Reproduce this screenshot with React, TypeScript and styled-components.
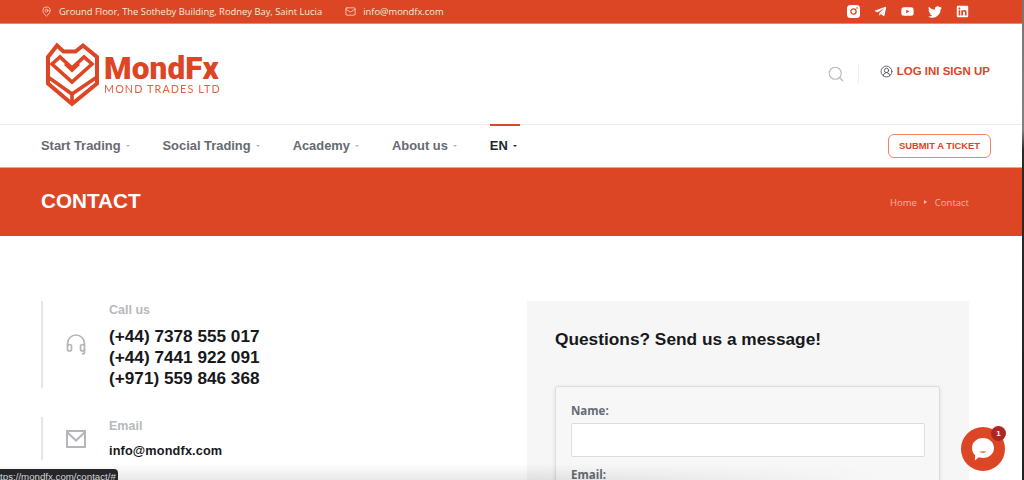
import * as React from 'react';
import styled, { createGlobalStyle } from 'styled-components';
import { FaTelegramPlane, FaYoutube, FaTwitter, FaLinkedin } from 'react-icons/fa';
import { MapPin, Mail, Search, CircleUserRound } from 'lucide-react';

const ORANGE = '#dc4625';

const Global = createGlobalStyle`
  html, body {
    margin: 0;
    padding: 0;
    background: #fff;
  }
  * {
    box-sizing: border-box;
  }
`;

const Shell = styled.div`
  position: relative;
  display: flex;
  width: 1024px;
  height: 480px;
  overflow: hidden;
  font-family: 'Liberation Sans', Arial, sans-serif;
`;

const Page = styled.div`
  flex: 1 0 0;
  min-width: 0;
`;

const Edge = styled.div`
  width: 2px;
  background: linear-gradient(#777 0, #86807c 130px, #2a2a2a 150px, #222 100%);
`;

const TopBar = styled.div`
  display: flex;
  align-items: center;
  justify-content: space-between;
  height: 24px;
  padding: 0 53px 0 41px;
  background: ${ORANGE};
  border-bottom: 1px solid #ef8468;
  color: #fbe6df;
  font-family: 'Open Sans', sans-serif;
  font-size: 9.4px;
`;

const TopInfo = styled.div`
  display: flex;
  align-items: center;
  gap: 7px;
  margin-right: 23px;
  svg {
    flex: none;
  }
`;

const TopLeft = styled.div`
  display: flex;
  align-items: center;
`;

const Socials = styled.div`
  display: flex;
  align-items: center;
  gap: 14px;
  color: #fff;
`;

const Header = styled.div`
  display: flex;
  align-items: center;
  justify-content: space-between;
  height: 101px;
  padding: 0 32px 0 45px;
  border-bottom: 1px solid #ececec;
`;

const Logo = styled.div`
  display: flex;
  align-items: center;
  gap: 3px;
  margin-top: 1px;
`;

const LogoText = styled.div`
  display: flex;
  flex-direction: column;
  margin-top: 1px;
  color: ${ORANGE};
`;

const LogoName = styled.div`
  font-family: Roboto, sans-serif;
  font-weight: 900;
  font-size: 31.5px;
  line-height: 27px;
  letter-spacing: 0.1px;
`;

const LogoSub = styled.div`
  font-family: Lato, sans-serif;
  font-size: 10.8px;
  line-height: 13px;
  letter-spacing: 1.1px;
  opacity: 0.85;
`;

const HeaderRight = styled.div`
  display: flex;
  align-items: center;
  margin-top: -1px;
`;

const SearchBox = styled.div`
  display: flex;
  align-items: center;
  height: 18px;
  padding-right: 13px;
  margin-right: 21px;
  border-right: 1px solid #eee;
  color: #b9b9b9;
`;

const Account = styled.div`
  display: flex;
  align-items: center;
  gap: 4px;
  margin-top: -5px;
  color: #4b4f58;
`;

const AccountLabel = styled.span`
  color: ${ORANGE};
  font-weight: 700;
  font-size: 11.5px;
`;

const Nav = styled.nav`
  display: flex;
  align-items: center;
  justify-content: space-between;
  height: 42px;
  padding: 0 31px 0 41px;
`;

const NavList = styled.div`
  display: flex;
  height: 100%;
  gap: 33px;
`;

const NavItem = styled.div<{ $active?: boolean }>`
  display: flex;
  align-items: center;
  gap: 5px;
  height: 100%;
  margin-top: -1px;
  padding: 0 ${(p) => (p.$active ? '3px' : '0')} 2px 0;
  border-top: 2px solid ${(p) => (p.$active ? '#e0442a' : 'transparent')};
  color: ${(p) => (p.$active ? '#23262b' : '#666a73')};
  font-weight: 700;
  font-size: 12.9px;
`;

const Caret = styled.span<{ $active?: boolean }>`
  width: 0;
  height: 0;
  margin-top: 1px;
  border-left: 2.5px solid transparent;
  border-right: 2.5px solid transparent;
  border-top: 2.5px solid ${(p) => (p.$active ? '#23262b' : '#b5b5b8')};
`;

const TicketButton = styled.button`
  width: 103px;
  height: 24px;
  margin-top: -1px;
  padding: 0;
  background: #fff;
  border: 1px solid #f0846b;
  border-radius: 6px;
  color: ${ORANGE};
  font-family: inherit;
  font-weight: 700;
  font-size: 9.4px;
`;

const Banner = styled.div`
  display: flex;
  align-items: center;
  justify-content: space-between;
  height: 69px;
  padding: 0 53px 0 41px;
  background: ${ORANGE};
  border-top: 1px solid #f2a18c;
`;

const BannerTitle = styled.h1`
  margin: 0 0 2px;
  color: #fff;
  font-size: 20.7px;
  font-weight: 700;
`;

const Crumbs = styled.div`
  display: flex;
  align-items: center;
  gap: 6px;
  color: #f3b0a0;
  font-family: 'Open Sans', sans-serif;
  font-size: 9.5px;
`;

const CrumbArrow = styled.span`
  width: 0;
  height: 0;
  margin: 0 1.5px;
  border-top: 2.5px solid transparent;
  border-bottom: 2.5px solid transparent;
  border-left: 3px solid #f6c4b7;
`;

const Main = styled.main`
  display: flex;
  padding: 65px 53px 0 41px;
`;

const InfoColumn = styled.div`
  display: flex;
  flex-direction: column;
  gap: 29px;
  width: 486px;
`;

const InfoBlock = styled.div`
  display: flex;
  align-items: center;
  border-left: 2px solid #e6e6e6;
`;

const InfoIcon = styled.div`
  display: flex;
  justify-content: center;
  width: 66px;
`;

const InfoText = styled.div`
  padding-top: 1px;
`;

const InfoLabel = styled.div`
  color: #b7b8bd;
  font-weight: 700;
  font-size: 12.5px;
  line-height: 16px;
`;

const Phones = styled.div`
  margin-top: 8px;
  margin-bottom: -1px;
  color: #17181b;
  font-weight: 700;
  font-size: 17.2px;
  line-height: 21px;
`;

const EmailText = styled.div`
  margin-top: 9px;
  padding-bottom: 1px;
  color: #17181b;
  font-weight: 700;
  font-size: 12.7px;
  line-height: 16px;
  letter-spacing: 0.15px;
`;

const FormPanel = styled.section`
  width: 442px;
  height: 300px;
  padding: 28px 29px 28px 28px;
  background: #f6f6f6;
`;

const FormTitle = styled.h2`
  margin: 0 0 36px;
  color: #17181b;
  font-size: 17.3px;
  line-height: 21px;
  font-weight: 700;
`;

const FormCard = styled.div`
  width: 385px;
  padding: 16px 14px 16px 15px;
  background: #f7f7f7;
  border: 1px solid #dcdcdc;
  border-radius: 3px;
  box-shadow: 0 1px 4px rgba(0, 0, 0, 0.1);
`;

const FieldLabel = styled.label`
  display: block;
  margin-bottom: 5px;
  color: #666a75;
  font-family: 'Open Sans', sans-serif;
  font-weight: 700;
  font-size: 11.5px;
  line-height: 15px;
`;

const FieldInput = styled.input`
  display: block;
  width: 100%;
  height: 34px;
  margin-bottom: 10px;
  background: #fff;
  border: 1px solid #dcdcdc;
  border-radius: 2px;
`;

const WindowShade = styled.div`
  position: absolute;
  left: 0;
  bottom: 0;
  width: 880px;
  height: 16px;
  background: linear-gradient(rgba(0, 0, 0, 0), rgba(0, 0, 0, 0.09));
  mask-image: linear-gradient(to right, #000 60%, transparent);
  pointer-events: none;
`;

const StatusTip = styled.div`
  position: absolute;
  left: -12px;
  top: 469px;
  width: 130px;
  height: 16px;
  padding: 1px 0 0 4px;
  background: #24262a;
  border-radius: 4px;
  color: #d6d6d6;
  font-size: 9.7px;
  line-height: 13px;
  white-space: nowrap;
`;

const ChatButton = styled.div`
  position: absolute;
  left: 961px;
  top: 427px;
  display: flex;
  align-items: center;
  justify-content: center;
  width: 44px;
  height: 44px;
  background: ${ORANGE};
  border-radius: 50%;
`;

const ChatBadge = styled.span`
  position: absolute;
  right: -1px;
  top: -1px;
  width: 15px;
  height: 15px;
  background: #ad2626;
  border-radius: 50%;
  color: #fff;
  font-size: 8px;
  font-weight: 700;
  line-height: 15px;
  text-align: center;
`;

const ShieldLogo = () => (
  <svg width="56" height="67" viewBox="45 40 56 67" fill="none" stroke={ORANGE} strokeWidth="4">
    <path d="M57 44.5 L63.5 50.5 H75.5 L83 44.5 L97 56 V82.5 L72 103 L48 82.5 V56 Z" />
    <path d="M52 63 L60 56 L72 67 L84 56 L92 63 L72 81 Z" strokeWidth="3.6" />
    <path d="M65 63 L72 69.5 L79 63" strokeWidth="3" />
    <path d="M48 76 L72 93 L97 76 M72 93 V103" strokeWidth="3.6" />
  </svg>
);

const InstagramIcon = () => (
  <svg width="13" height="13" viewBox="0 0 13 13">
    <rect width="13" height="13" rx="3.5" fill="#fff" />
    <circle cx="6.5" cy="6.5" r="2.6" fill="none" stroke={ORANGE} strokeWidth="1.3" />
    <circle cx="10" cy="3" r="0.8" fill={ORANGE} />
  </svg>
);

const HeadsetIcon = () => (
  <svg width="20" height="21" viewBox="0 0 20 21" fill="none" stroke="#b5b5ba" strokeWidth="1.7">
    <path d="M1.5 12 V9.5 A8.5 8.5 0 0 1 18.5 9.5 V12" />
    <rect x="1.5" y="10.5" width="4" height="6.5" rx="2" />
    <rect x="14.5" y="10.5" width="4" height="6.5" rx="2" />
    <path d="M18.5 15 V18 Q18.5 20 16 20" />
  </svg>
);

const EnvelopeIcon = () => (
  <svg width="20" height="18" viewBox="0 0 20 18" fill="none" stroke="#b5b5ba" strokeWidth="2">
    <rect x="1" y="1" width="18" height="16" />
    <path d="M1 2 L10 10.5 L19 2" />
  </svg>
);

const ChatIcon = () => (
  <svg width="24" height="25" viewBox="0 0 24 25">
    <path d="M12 1 C18.4 1 23 5.4 23 11 C23 16.6 18.4 21 12 21 C10.5 21 9 20.7 7.8 20.3 L3.8 23.5 L4.2 18.2 C2 16.3 1 13.8 1 11 C1 5.4 5.6 1 12 1 Z" fill="#fff" />
    <path d="M8.5 14.5 Q12 17 15.5 14.5 Z" fill={ORANGE} />
  </svg>
);

const navItems = ['Start Trading', 'Social Trading', 'Academy', 'About us'];

const App = () => (
  <Shell>
    <Global />
    <Page>
      <TopBar>
        <TopLeft>
          <TopInfo>
            <MapPin size={11} strokeWidth={1.6} />
            Ground Floor, The Sotheby Building, Rodney Bay, Saint Lucia
          </TopInfo>
          <TopInfo>
            <Mail size={11} strokeWidth={1.6} />
            info@mondfx.com
          </TopInfo>
        </TopLeft>
        <Socials>
          <InstagramIcon />
          <FaTelegramPlane size={13} />
          <FaYoutube size={13} />
          <FaTwitter size={14} />
          <FaLinkedin size={13} />
        </Socials>
      </TopBar>

      <Header>
        <Logo>
          <ShieldLogo />
          <LogoText>
            <LogoName>MondFx</LogoName>
            <LogoSub>MOND TRADES LTD</LogoSub>
          </LogoText>
        </Logo>
        <HeaderRight>
          <SearchBox>
            <Search size={18} strokeWidth={1.5} />
          </SearchBox>
          <Account>
            <CircleUserRound size={13} strokeWidth={1.6} />
            <AccountLabel>LOG INI SIGN UP</AccountLabel>
          </Account>
        </HeaderRight>
      </Header>

      <Nav>
        <NavList>
          {navItems.map((item) => (
            <NavItem key={item}>
              {item}
              <Caret />
            </NavItem>
          ))}
          <NavItem $active>
            EN
            <Caret $active />
          </NavItem>
        </NavList>
        <TicketButton>SUBMIT A TICKET</TicketButton>
      </Nav>

      <Banner>
        <BannerTitle>CONTACT</BannerTitle>
        <Crumbs>
          Home
          <CrumbArrow />
          Contact
        </Crumbs>
      </Banner>

      <Main>
        <InfoColumn>
          <InfoBlock>
            <InfoIcon>
              <HeadsetIcon />
            </InfoIcon>
            <InfoText>
              <InfoLabel>Call us</InfoLabel>
              <Phones>
                (+44) 7378 555 017
                <br />
                (+44) 7441 922 091
                <br />
                (+971) 559 846 368
              </Phones>
            </InfoText>
          </InfoBlock>
          <InfoBlock>
            <InfoIcon>
              <EnvelopeIcon />
            </InfoIcon>
            <InfoText>
              <InfoLabel>Email</InfoLabel>
              <EmailText>info@mondfx.com</EmailText>
            </InfoText>
          </InfoBlock>
        </InfoColumn>

        <FormPanel>
          <FormTitle>Questions? Send us a message!</FormTitle>
          <FormCard>
            <FieldLabel>Name:</FieldLabel>
            <FieldInput />
            <FieldLabel>Email:</FieldLabel>
            <FieldInput />
          </FormCard>
        </FormPanel>
      </Main>
    </Page>
    <Edge />

    <WindowShade />
    <StatusTip>https://mondfx.com/contact/#</StatusTip>
    <ChatButton>
      <ChatIcon />
      <ChatBadge>1</ChatBadge>
    </ChatButton>
  </Shell>
);

export default App;
